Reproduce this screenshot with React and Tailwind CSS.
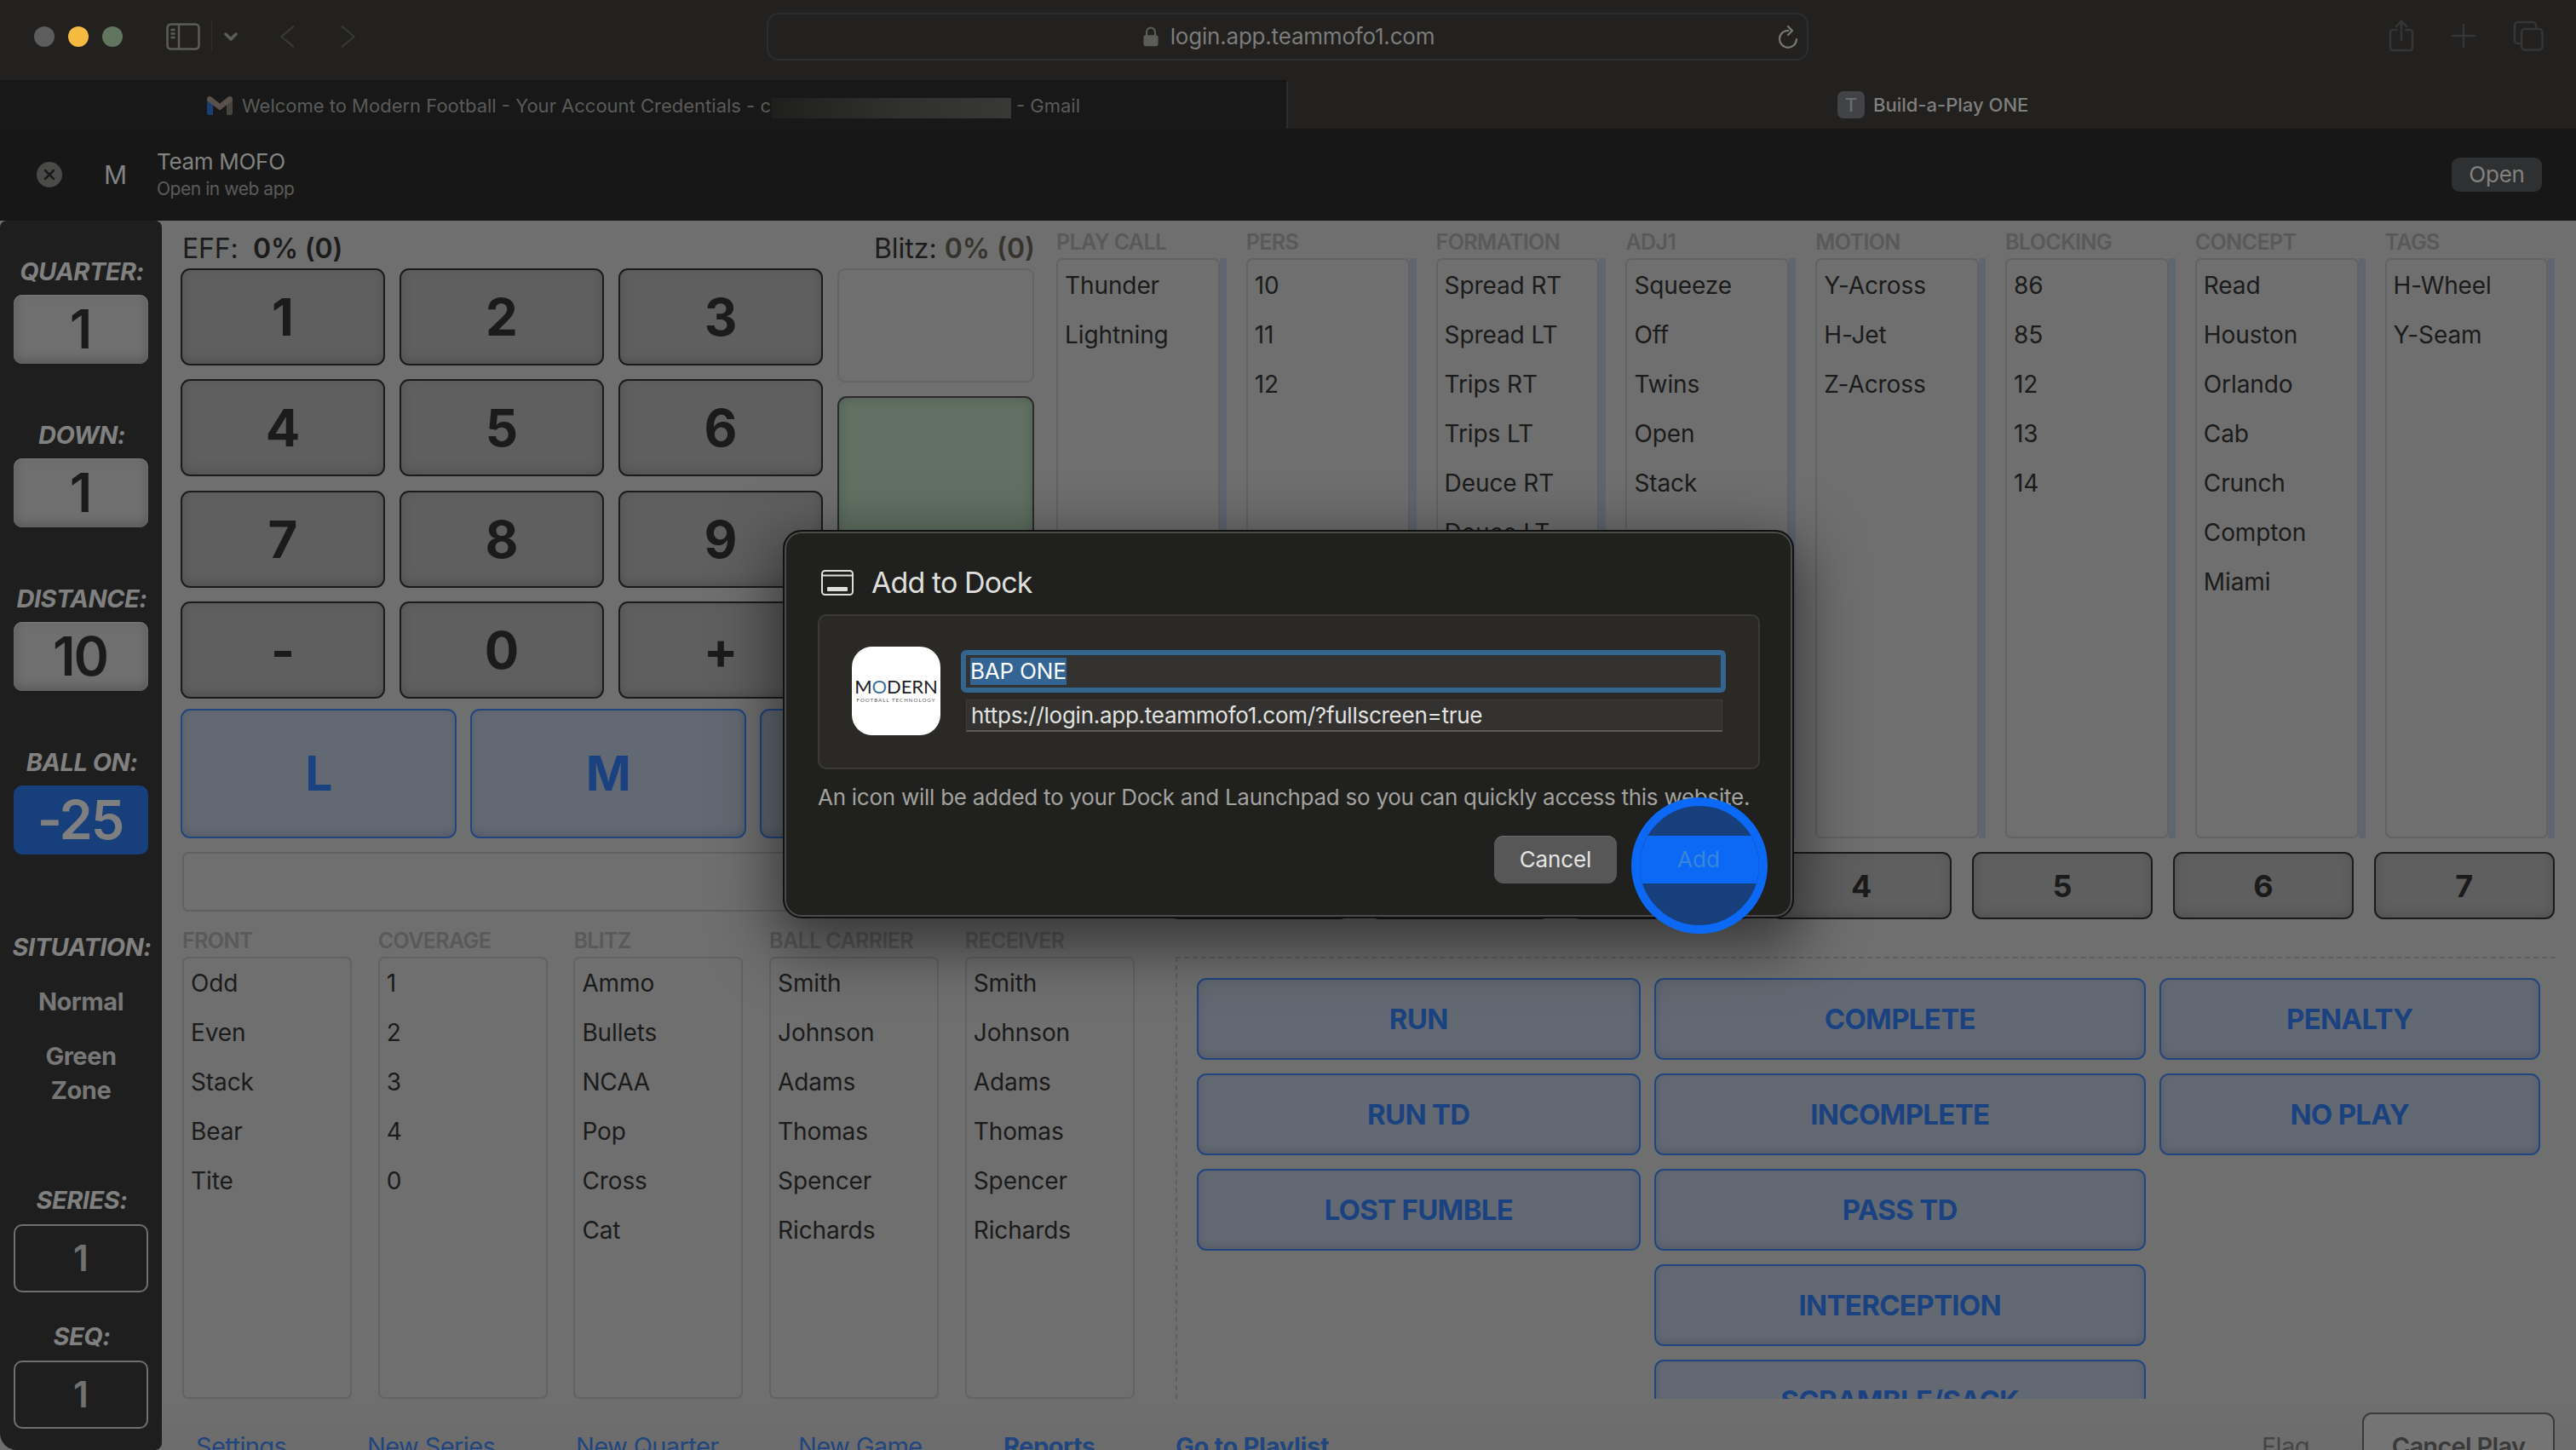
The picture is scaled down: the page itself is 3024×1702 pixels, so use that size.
import React from 'react';

const keypad = ['1', '2', '3', '4', '5', '6', '7', '8', '9', '-', '0', '+'];
const zones = ['L', 'M', 'R'];
const downs = ['1', '2', '3', '4', '5', '6', '7'];

const callLists = [
  { name: 'PLAY CALL', items: ['Thunder', 'Lightning'] },
  { name: 'PERS', items: ['10', '11', '12'] },
  { name: 'FORMATION', items: ['Spread RT', 'Spread LT', 'Trips RT', 'Trips LT', 'Deuce RT', 'Deuce LT'] },
  { name: 'ADJ1', items: ['Squeeze', 'Off', 'Twins', 'Open', 'Stack'] },
  { name: 'MOTION', items: ['Y-Across', 'H-Jet', 'Z-Across'] },
  { name: 'BLOCKING', items: ['86', '85', '12', '13', '14'] },
  { name: 'CONCEPT', items: ['Read', 'Houston', 'Orlando', 'Cab', 'Crunch', 'Compton', 'Miami'] },
  { name: 'TAGS', items: ['H-Wheel', 'Y-Seam'] },
];

const players = ['Smith', 'Johnson', 'Adams', 'Thomas', 'Spencer', 'Richards'];

const resultLists = [
  { name: 'FRONT', items: ['Odd', 'Even', 'Stack', 'Bear', 'Tite'] },
  { name: 'COVERAGE', items: ['1', '2', '3', '4', '0'] },
  { name: 'BLITZ', items: ['Ammo', 'Bullets', 'NCAA', 'Pop', 'Cross', 'Cat'] },
  { name: 'BALL CARRIER', items: players },
  { name: 'RECEIVER', items: players },
];

const outcomes = [
  { width: 'w-[521px]', items: ['RUN', 'RUN TD', 'LOST FUMBLE'] },
  { width: 'w-[577px]', items: ['COMPLETE', 'INCOMPLETE', 'PASS TD', 'INTERCEPTION', 'SCRAMBLE/SACK'] },
  { width: 'w-[447px]', items: ['PENALTY', 'NO PLAY'] },
];

const BrowserToolbar = () => (
  <div className="flex h-[94px] shrink-0 items-start bg-[#22211f] text-[#5c5c5a]">
    <div className="flex h-[86px] w-[900px] items-center pl-10">
      <div className="flex gap-4">
        <span className="h-6 w-6 rounded-full bg-[#5d5d5d]"></span>
        <span className="h-6 w-6 rounded-full bg-[#f5bb40]"></span>
        <span className="h-6 w-6 rounded-full bg-[#62765f]"></span>
      </div>
      <svg className="ml-[51px] h-[32px] w-[40px]" viewBox="0 0 40 32" fill="none" stroke="currentColor" strokeWidth="2.5">
        <rect x="1.5" y="1.5" width="37" height="29" rx="4" />
        <path d="M15 1.5v29M5.5 8h5M5.5 12.5h5M5.5 17h5" />
      </svg>
      <span className="ml-[13px] h-9 w-px bg-[#2e2e2c]"></span>
      <svg className="ml-[14px] h-[10px] w-4" viewBox="0 0 16 10" fill="none" stroke="currentColor" strokeWidth="3.5" strokeLinecap="round" strokeLinejoin="round">
        <path d="M2 2l6 6 6-6" />
      </svg>
      <svg className="ml-[49px] h-[28px] w-[18px] text-[#383837]" viewBox="0 0 20 30" fill="none" stroke="currentColor" strokeWidth="2.5" strokeLinecap="round" strokeLinejoin="round">
        <path d="M18 2L2.5 15 18 28" />
      </svg>
      <svg className="ml-[54px] h-[28px] w-[18px] text-[#383837]" viewBox="0 0 20 30" fill="none" stroke="currentColor" strokeWidth="2.5" strokeLinecap="round" strokeLinejoin="round">
        <path d="M2 2l15.500 13L2 28" />
      </svg>
    </div>
    <div className="mt-[15px] flex h-14 w-[1223px] items-center rounded-[14px] border-2 border-[#2b2d30]">
      <div className="flex flex-1 items-center justify-center gap-[14px] pl-[37px]">
        <svg className="h-[26px] w-[18px]" viewBox="0 0 20 26">
          <rect x="0.5" y="11" width="19" height="14.5" rx="3" fill="currentColor" />
          <path d="M4.5 12V7a5.500 5.500 0 0 1 11 0v5" fill="none" stroke="currentColor" strokeWidth="2.4" />
        </svg>
        <span className="text-[26px] leading-8 tracking-[-0.2px] text-[#7c7c7b]">login.app.teammofo1.com</span>
      </div>
      <svg className="mr-[10px] mt-[2px] h-[28px] w-[24px] text-[#777775]" viewBox="0 0 24 28" fill="none" stroke="currentColor" strokeWidth="2.2" strokeLinecap="round" strokeLinejoin="round">
        <path d="M12.500 5.800A10 10 0 1 0 22 16M12 1l5 5-5 5" />
      </svg>
    </div>
    <div className="flex h-[84px] flex-1 items-center justify-end gap-[44px] pr-[38px] text-[#343536]">
      <svg className="h-[38px] w-[30px]" viewBox="0 0 30 38" fill="none" stroke="currentColor" strokeWidth="2.5" strokeLinecap="round" strokeLinejoin="round">
        <path d="M10 12H5a3 3 0 0 0-3 3v18a3 3 0 0 0 3 3h20a3 3 0 0 0 3-3V15a3 3 0 0 0-3-3h-5M15 24V2M9 8l6-6 6 6" />
      </svg>
      <svg className="h-[28px] w-[28px]" viewBox="0 0 28 28" fill="none" stroke="currentColor" strokeWidth="2.5" strokeLinecap="round">
        <path d="M14 1v26M1 14h26" />
      </svg>
      <svg className="h-[36px] w-[36px]" viewBox="0 0 36 36" fill="none" stroke="currentColor" strokeWidth="2.5" strokeLinejoin="round">
        <rect x="10" y="10" width="24.5" height="24.5" rx="4" />
        <path d="M9 27H6a4 4 0 0 1-4-4V6a4 4 0 0 1 4-4h17a4 4 0 0 1 4 4v3" />
      </svg>
    </div>
  </div>
);

const TabBar = () => (
  <div className="flex h-[57px] shrink-0 text-[22px] leading-7">
    <div className="flex w-[1512px] items-center border-r-2 border-t-2 border-r-[#2b2d30] border-t-[#151515] bg-[#181818] pl-[243px] text-[#5a5a5a]">
      <svg className="h-[22px] w-[30px]" viewBox="0 0 30 22">
        <path d="M0 3v16.500A2.500 2.500 0 0 0 2.500 22H7V8z" fill="#1c3d70" />
        <path d="M30 3v16.500a2.500 2.500 0 0 1-2.500 2.500H23V8z" fill="#46443f" />
        <path d="M0 3.500C0 .5 3 -1 5.500 1L15 8.500 24.500 1C27 -1 30 .5 30 3.500V5L15 16.500 0 5z" fill="#5a514b" />
      </svg>
      <span className="ml-[11px] whitespace-nowrap">Welcome to Modern Football - Your Account Credentials - c</span>
      <span className="ml-px mt-[6px] h-[24px] w-[281px] bg-gradient-to-r from-[#1f1f1e] via-[#2f2f2d] to-[#383836]"></span>
      <span className="ml-[6px] whitespace-nowrap">- Gmail</span>
    </div>
    <div className="flex flex-1 items-center bg-[#22211f] pl-[645px] font-medium text-[#7f7f7d]">
      <span className="flex h-8 w-8 items-center justify-center rounded-[7px] bg-[#424346] text-[22px] text-[#6b6c70]">T</span>
      <span className="ml-[10px] mt-px">Build-a-Play ONE</span>
    </div>
  </div>
);

const WebAppBanner = () => (
  <div className="flex h-[108px] shrink-0 items-center bg-[#171717] pl-[43px] pr-10 text-[#828280]">
    <svg className="h-[30px] w-[30px]" viewBox="0 0 30 30">
      <circle cx="15" cy="15" r="15" fill="#4a4a48" />
      <path d="M10 10l10 10M20 10L10 20" stroke="#191919" strokeWidth="2.5" strokeLinecap="round" />
    </svg>
    <span className="ml-[49px] w-[62px] text-[30px]">M</span>
    <div className="flex flex-1 flex-col pt-[2px]">
      <span className="text-[26px] leading-8 tracking-[-0.3px]">Team MOFO</span>
      <span className="text-[21px] leading-8 tracking-[-0.45px] text-[#5b5b5a]">Open in web app</span>
    </div>
    <button className="h-10 w-[106px] rounded-[9px] bg-[#2f3031] pb-px text-[26px] leading-8 tracking-[-0.2px]">Open</button>
  </div>
);

const StatLabel = ({ children }) => (
  <span className="h-[36px] whitespace-nowrap pl-[2px] text-[29px] font-bold italic leading-9 tracking-[-0.5px] text-[#808080]">{children}</span>
);

const StatBox = ({ label, value, blue }) => (
  <div className="flex h-[192px] shrink-0 flex-col items-center">
    <StatLabel>{label}</StatLabel>
    <div
      className={`mt-[9px] flex h-[81px] w-[158px] items-center justify-center rounded-[10px] pr-[2px] text-[63px] font-semibold leading-none tracking-[-2px] ${
        blue ? 'bg-[#163f7c] text-[#7f7f7f]' : 'bg-[#6f6f6f] text-[#1b1b1b] shadow-[inset_0_-4px_12px_#575757,inset_0_0_0_2px_#7a7a7a]'
      }`}
    >
      {value}
    </div>
  </div>
);

const CountBox = ({ label, value }) => (
  <div className="flex h-[160px] shrink-0 flex-col items-center">
    <StatLabel>{label}</StatLabel>
    <div className="mt-[10px] flex h-[80px] w-[158px] items-center justify-center rounded-[10px] border-2 border-[#707070] text-[42px] font-semibold leading-none text-[#707070]">{value}</div>
  </div>
);

const GameSidebar = () => (
  <aside className="flex w-[190px] shrink-0 flex-col items-center overflow-hidden rounded-bl-[20px] rounded-r-[8px] rounded-tl-[8px] bg-[#1e1e1e] pt-[42px]">
    <StatBox label="QUARTER:" value="1" />
    <StatBox label="DOWN:" value="1" />
    <StatBox label="DISTANCE:" value="10" />
    <StatBox label="BALL ON:" value="-25" blue />
    <div className="mt-[25px] flex h-[297px] shrink-0 flex-col items-center text-[29px] font-bold text-[#777777]">
      <StatLabel>SITUATION:</StatLabel>
      <span className="mt-[26px] leading-10 tracking-[-0.5px]">Normal</span>
      <span className="mt-[24px] w-[120px] text-center leading-10 tracking-[-0.5px]">Green Zone</span>
    </div>
    <CountBox label="SERIES:" value="1" />
    <CountBox label="SEQ:" value="1" />
  </aside>
);

const PadButton = ({ children, className }) => (
  <button className={`rounded-[11px] border-2 border-[#1b1b1b] bg-[#5f5f5f] font-bold leading-none text-[#1b1b1b] shadow-[inset_0_-4px_12px_#525252] ${className}`}>{children}</button>
);

const BlueButton = ({ children, className }) => (
  <button className={`shrink-0 rounded-[11px] border-2 border-[#20457f] bg-[#636972] font-bold leading-none tracking-[-0.7px] text-[#1b4280] shadow-[inset_0_-4px_10px_#565d69] ${className}`}>{children}</button>
);

const PickList = ({ list, strip, className }) => (
  <div className={`flex shrink-0 flex-col ${className}`}>
    <span className="h-[37px] whitespace-nowrap text-[25px] font-semibold leading-9 tracking-[-0.6px] text-[#595959]">{list.name}</span>
    <div className="flex min-h-0 flex-1">
      <ul className={`flex-1 overflow-hidden rounded-[7px] border-2 border-[#626262] pl-2 text-[28px] leading-[58px] tracking-[-0.1px] text-[#1b1b1b] ${strip ? 'pt-px' : ''}`}>
        {list.items.map((item) => (
          <li key={item}>{item}</li>
        ))}
      </ul>
      {strip && <span className="w-2 bg-[#5f6672]"></span>}
    </div>
  </div>
);

const Scoreboard = () => (
  <div className="flex h-[725px] shrink-0">
    <div className="ml-[22px] w-[1004px] pt-[12px]">
      <div className="flex h-[44px] items-center justify-between pb-[2px] pl-[2px] pr-px text-[32px] leading-10 text-[#1b1b1b]">
        <span className="tracking-[-0.2px]">EFF:&nbsp; <b className="font-semibold">0% (0)</b></span>
        <span>Blitz: <b className="font-semibold text-[#35332d]">0% (0)</b></span>
      </div>
      <div className="flex h-[506px] gap-[17px]">
        <div className="grid grid-cols-3 content-start gap-x-[17px] gap-y-[16.4px]">
          {keypad.map((key) => (
            <PadButton key={key} className="h-[114px] w-[240px] text-[60px]">{key}</PadButton>
          ))}
        </div>
        <div className="flex w-[231px] flex-col gap-4">
          <div className="h-[134px] rounded-[9px] border-2 border-[#646464]"></div>
          <div className="flex-1 rounded-[11px] border-2 border-[#2b2b2b] bg-[#617163] shadow-[inset_0_0_12px_#505c51]"></div>
        </div>
      </div>
      <div className="mt-[11px] flex gap-[16px]">
        {zones.map((zone) => (
          <BlueButton key={zone} className="h-[152px] w-[324px] pb-[2px] text-[57px]">{zone}</BlueButton>
        ))}
      </div>
    </div>
    <div className="ml-[24px] flex gap-[23px] pt-[7px]">
      {callLists.map((list) => (
        <PickList key={list.name} list={list} strip className="w-[199.8px]" />
      ))}
    </div>
  </div>
);

const DownRow = () => (
  <div className="mt-[16px] flex h-[79px] shrink-0 pl-[24px]">
    <div className="h-[70px] w-[1142px] rounded-[7px] border-2 border-[#606060]"></div>
    <div className="ml-[16px] flex gap-[24px]">
      {downs.map((down) => (
        <PadButton key={down} className="h-[79px] w-[211.8px] text-[36px]">{down}</PadButton>
      ))}
    </div>
  </div>
);

const Outcomes = () => (
  <div className="flex h-[563px] shrink-0 pl-[24px] pt-[7px]">
    <div className="flex gap-[30.7px]">
      {resultLists.map((list) => (
        <PickList key={list.name} list={list} className="w-[199px]" />
      ))}
    </div>
    <div className="ml-[48px] mt-[37px] flex w-[1620px] gap-4 overflow-hidden border-l-2 border-t-2 border-dashed border-[#5f5f5f] pl-[23px] pt-[23px]">
      {outcomes.map((column) => (
        <div key={column.width} className={`flex shrink-0 flex-col gap-4 ${column.width}`}>
          {column.items.map((item) => (
            <BlueButton key={item} className="h-24 text-[33px]">{item}</BlueButton>
          ))}
        </div>
      ))}
    </div>
  </div>
);

const FooterLinks = () => (
  <footer className="flex flex-1 shrink-0 items-start whitespace-nowrap bg-gradient-to-b from-[#6f6f6f] to-[#6a6a6a] pl-[40px] pt-[16px] text-[29px] leading-10 tracking-[-0.6px] text-[#20457f]">
    <span className="mt-[20px] w-[201px]">Settings</span>
    <span className="mt-[20px] w-[245px]">New Series</span>
    <span className="mt-[20px] w-[261px]">New Quarter</span>
    <span className="mt-[20px] w-[241px]">New Game</span>
    <span className="mt-[20px] w-[202px] font-bold tracking-[-0.5px]">Reports</span>
    <span className="mt-[20px] w-[1275px] font-bold tracking-[-0.3px]">Go to Playlist</span>
    <span className="mt-[20px] w-[118px] text-[#454545]">Flag</span>
    <button className="h-[80px] w-[226px] rounded-[11px] border-2 border-[#3b3b3b] bg-[#747474] font-semibold tracking-[-0.7px] text-[#3a3a3a]">Cancel Play</button>
  </footer>
);

const AddToDockDialog = () => (
  <div className="absolute left-[919px] top-[622px] h-[456px] w-[1187px] rounded-[22px] border-2 border-[#111111] bg-[#20201e] pl-[39px] pt-[38px] shadow-[inset_0_0_0_2px_#4b4b49,0_24px_70px_10px_rgba(0,0,0,0.5)]">
    <div className="flex h-[44px] items-center gap-[21px] pl-1 text-[#dededc]">
      <svg className="h-[30px] w-[38px]" viewBox="0 0 38 30" fill="none" stroke="currentColor" strokeWidth="2">
        <rect x="1" y="1" width="36" height="28" rx="3.5" />
        <path d="M1 6.500h36" />
        <rect x="7" y="20" width="24" height="5" rx="1" fill="currentColor" stroke="none" />
      </svg>
      <h2 className="text-[34px] leading-10 tracking-[-0.9px]">Add to Dock</h2>
    </div>
    <div className="mt-[15px] flex h-[182px] w-[1106px] rounded-[10px] border-2 border-[#3b3a37] bg-[#2a2925] pl-[38px] pt-[36px]">
      <div className="flex h-[104px] w-[104px] flex-col items-center justify-center rounded-[24px] bg-white text-[#1d2024]">
        <span className="flex h-[18px] items-center font-['Lato','Inter',sans-serif] text-[22px] leading-4 tracking-[-0.1px]">M<span className="text-[#3d6f9f]">O</span>DERN</span>
        <span className="mt-[3px] whitespace-nowrap font-['Lato','Inter',sans-serif] text-[6px] leading-[8px] tracking-[1.1px] text-[#555555]">FOOTBALL TECHNOLOGY</span>
      </div>
      <div className="ml-[24px] mt-[4px] w-[898px] text-[26px] leading-8">
        <div className="flex h-[50px] items-center rounded-[6px] border-[6px] border-[#33658f] bg-[#333230] pl-[5px] text-white">
          <span className="h-8 bg-[#336494] tracking-[-0.2px]">BAP ONE</span>
        </div>
        <div className="ml-[6px] mr-1 mt-2 flex h-[38px] items-center whitespace-nowrap border border-b-2 border-[#3d3c3a] border-b-[#5c5b59] bg-[#333230] pl-[5px] tracking-[-0.26px] text-[#e2e2e0]">https://login.app.teammofo1.com/?fullscreen=true</div>
      </div>
    </div>
    <p className="mt-[15px] whitespace-nowrap text-[26px] leading-9 tracking-[-0.26px] text-[#a3a29f]">An icon will be added to your Dock and Launchpad so you can quickly access this website.</p>
    <button className="ml-[794px] mt-[27px] h-14 w-[144px] rounded-[11px] bg-[#575757] pb-px text-[26px] leading-8 tracking-[-0.1px] text-[#e4e4e4] shadow-[inset_0_1px_0_#6b6b6b]">Cancel</button>
    {/* highlight ring over the Add button */}
    <div className="absolute left-[994px] top-[312px] h-40 w-40 overflow-hidden rounded-full border-[10px] border-[#0b69f5] bg-[#163f7c] pt-[35px]">
      <div className="flex h-[56px] items-center justify-center bg-[#0b69f5] pb-[2px] pr-[2px] text-[26px] text-[#3a86d8]">Add</div>
    </div>
  </div>
);

export default function App() {
  return (
    <div className="relative flex h-[1702px] w-[3024px] flex-col overflow-hidden bg-[#6f6f6f] font-['Inter','Liberation_Sans',sans-serif]">
      <BrowserToolbar />
      <TabBar />
      <WebAppBanner />
      <div className="flex min-h-0 flex-1">
        <GameSidebar />
        <main className="flex min-w-0 flex-1 flex-col">
          <Scoreboard />
          <DownRow />
          <Outcomes />
          <FooterLinks />
        </main>
      </div>
      <AddToDockDialog />
    </div>
  );
}
